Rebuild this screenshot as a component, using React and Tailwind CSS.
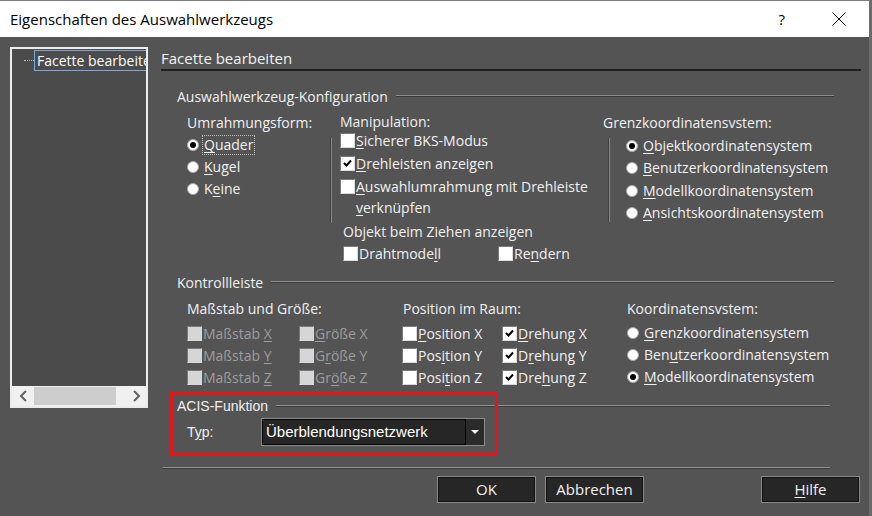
import React from "react";

const ui = "font-['Open_Sans',sans-serif]";
const arial = "font-['Liberation_Sans',Arial,sans-serif]";

function Acc({ text, at, dim }) {
  if (at === undefined || at < 0) return <span>{text}</span>;
  return (
    <span className={dim ? "text-[#9d9d9d]" : ""}>
      {text.slice(0, at)}
      <span className="underline underline-offset-2 decoration-1">{text[at]}</span>
      {text.slice(at + 1)}
    </span>
  );
}

function Radio({ on }) {
  return (
    <span className="w-[12px] h-[12px] rounded-full bg-white border border-[#a8a8a8] flex items-center justify-center shrink-0">
      {on && <span className="w-[6px] h-[6px] rounded-full bg-black" />}
    </span>
  );
}

function Box({ on, dim }) {
  return (
    <span
      className={
        "w-[15px] h-[15px] shrink-0 flex items-center justify-center border border-t-[#7a7a7a] border-l-[#7a7a7a] border-b-[#d9d9d9] border-r-[#d9d9d9] " +
        (dim ? "bg-[#d6d6d6]" : "bg-white")
      }
    >
      {on && (
        <svg width="9" height="8" viewBox="0 0 9 8">
          <path d="M1 4 L3.5 6.5 L8 1.5" fill="none" stroke="#000" strokeWidth="2" />
        </svg>
      )}
    </span>
  );
}

function RadioRow({ text, at, on, h = "h-[22px]", focus }) {
  return (
    <div className={"flex items-center gap-[4px] " + h}>
      <Radio on={on} />
      <span className={"leading-[18px] px-[1px] " + (focus ? "outline outline-1 outline-dotted outline-[#bbbbbb]" : "")}>
        <Acc text={text} at={at} />
      </span>
    </div>
  );
}

function CheckRow({ text, at, on, dim, h = "h-[22px]" }) {
  return (
    <div className={"flex items-center gap-[1px] " + h}>
      <Box on={on} dim={dim} />
      <span className={dim ? "text-[#9d9d9d]" : ""}>
        <Acc text={text} at={at} dim={dim} />
      </span>
    </div>
  );
}

function GroupLabel({ text, font = ui, w = "pr-[27px]" }) {
  return (
    <div className={"flex items-center h-[18px] pl-[16px] " + w}>
      <span className={font}>{text}</span>
      <div className="flex-1 ml-[8px] border-t border-t-[#8f8f8f] border-b border-b-[#3a3a3a]" />
    </div>
  );
}

function VSep({ h }) {
  return <div className={"w-[2px] border-l border-l-[#3c3c3c] border-r border-r-[#8a8a8a] " + h} />;
}

function Btn({ children, w = "w-[99px]" }) {
  return (
    <button className={"h-[27px] bg-[#262626] border border-[#8a8a8a] shadow-[inset_0_0_0_1px_#111] text-[#f2f2f2] text-[15px] flex items-center justify-center " + w}>
      {children}
    </button>
  );
}

export default function App() {
  return (
    <div className={"w-[872px] h-[516px] bg-[#545454] border-t border-t-[#7d7d7d] border-r-[3px] border-r-[#6b6b6b] overflow-hidden relative text-[14px] text-[#f1f1f1] " + ui}>
      {/* title bar */}
      <div className="h-[36px] bg-white flex items-center pl-[10px] text-black">
        <span className="text-[15px]">Eigenschaften des Auswahlwerkzeugs</span>
        <span className="ml-auto mr-[47px] text-[15px]">?</span>
        <svg className="mr-[23px]" width="14" height="14" viewBox="0 0 14 14">
          <path d="M0.5 0.5 L13.5 13.5 M13.5 0.5 L0.5 13.5" stroke="#000" strokeWidth="1" />
        </svg>
      </div>

      <div className="flex">
        {/* tree */}
        <div className="ml-[10px] mt-[10px] w-[138px] h-[361px] border-2 border-[#ececec] bg-[#4b4b4b] flex flex-col">
          <div className="flex items-center h-[22px] pl-[12px] overflow-hidden">
            <div className="w-[10px] shrink-0 border-t border-dotted border-[#bdbdbd]" />
            <div className="shrink-0 border border-[#7fa8d8] h-[21px] flex items-center pl-[2px] pr-[3px] whitespace-nowrap text-white">
              Facette bearbeiten
            </div>
          </div>
          <div className="flex-1" />
          <div className="h-[20px] bg-[#f0f0f0] flex items-center">
            <svg className="ml-[7px]" width="10" height="12" viewBox="0 0 10 12">
              <path d="M7 1 L2 6 L7 11" fill="none" stroke="#606060" strokeWidth="2" />
            </svg>
            <div className="ml-[5px] w-[82px] h-[18px] bg-[#cdcdcd]" />
            <svg className="ml-[15px]" width="10" height="12" viewBox="0 0 10 12">
              <path d="M3 1 L8 6 L3 11" fill="none" stroke="#606060" strokeWidth="2" />
            </svg>
          </div>
        </div>

        {/* right column */}
        <div className="ml-[13px] w-[700px] pt-[10px] flex flex-col">
          <div className="h-[22px] flex items-center text-[15px] border-b-2 border-b-[#1f1f1f] box-content">
            Facette bearbeiten
          </div>

          {/* group 1 */}
          <div className="mt-[16px]">
            <GroupLabel text="Auswahlwerkzeug-Konfiguration" />
          </div>
          <div className="mt-[7px] flex pl-[26px] h-[152px]">
            <div className="w-[143px] flex flex-col">
              <div className="h-[20px] flex items-center">Umrahmungsform:</div>
              <div className="mt-[2px]">
                <RadioRow text="Quader" at={0} on focus />
                <RadioRow text="Kugel" at={0} />
                <RadioRow text="Keine" at={1} />
              </div>
            </div>
            <div className="mt-[26px]">
              <VSep h="h-[85px]" />
            </div>
            <div className="ml-[8px] w-[263px] flex flex-col">
              <div className="h-[18px] flex items-center">Manipulation:</div>
              <CheckRow text="Sicherer BKS-Modus" at={0} h="h-[20px]" />
              <div className="mt-[2px]">
                <CheckRow text="Drehleisten anzeigen" at={0} on />
              </div>
              <div className="mt-[2px] flex flex-col">
                <CheckRow text="Auswahlumrahmung mit Drehleiste" at={0} h="h-[21px]" />
                <div className="h-[21px] flex items-center pl-[16px]">
                  <Acc text="verknüpfen" at={0} />
                </div>
              </div>
              <div className="h-[22px] mt-[2px] flex items-center pl-[3px]">Objekt beim Ziehen anzeigen</div>
              <div className="flex">
                <div className="w-[158px] pl-[3px]">
                  <CheckRow text="Drahtmodell" at={9} />
                </div>
                <CheckRow text="Rendern" at={2} />
              </div>
            </div>
            <div className="flex flex-col">
              <div className="h-[20px] flex items-center">Grenzkoordinatensvstem:</div>
              <div className="flex">
                <div className="ml-[5px] mt-[6px]">
                  <VSep h="h-[84px]" />
                </div>
                <div className="ml-[16px] flex flex-col mt-[3px]">
                  <RadioRow text="Objektkoordinatensystem" at={0} on />
                  <RadioRow text="Benutzerkoordinatensystem" at={0} />
                  <RadioRow text="Modellkoordinatensystem" at={0} h="h-[23px]" />
                  <RadioRow text="Ansichtskoordinatensystem" at={0} />
                </div>
              </div>
            </div>
          </div>

          {/* group 2 */}
          <div className="mt-[9px]">
            <GroupLabel text="Kontrollleiste" />
          </div>
          <div className="mt-[7px] pl-[26px] grid grid-cols-[112px_103px_100px_125px_1fr]">
            <div className="col-span-2 h-[20px] flex items-center">Maßstab und Größe:</div>
            <div className="col-span-2 h-[20px] flex items-center pl-[1px]">Position im Raum:</div>
            <div className="h-[20px] flex items-center">Koordinatensvstem:</div>

            <div className="mt-[4px]"><CheckRow text="Maßstab X" at={8} dim /></div>
            <div className="mt-[4px]"><CheckRow text="Größe X" at={0} dim /></div>
            <div className="mt-[4px]"><CheckRow text="Position X" at={0} /></div>
            <div className="mt-[4px]"><CheckRow text="Drehung X" at={0} on /></div>
            <div className="mt-[4px]"><RadioRow text="Grenzkoordinatensystem" at={0} /></div>

            <CheckRow text="Maßstab Y" at={8} dim />
            <CheckRow text="Größe Y" at={1} dim />
            <CheckRow text="Position Y" at={3} />
            <CheckRow text="Drehung Y" at={1} on />
            <RadioRow text="Benutzerkoordinatensystem" at={3} />

            <CheckRow text="Maßstab Z" at={8} dim />
            <CheckRow text="Größe Z" at={2} dim />
            <CheckRow text="Position Z" at={4} />
            <CheckRow text="Drehung Z" at={3} on />
            <RadioRow text="Modellkoordinatensystem" at={0} on />
          </div>

          {/* group 3 */}
          <div className="mt-[9px]">
            <GroupLabel text="ACIS-Funktion" font={arial} w="pr-[31px]" />
          </div>
          <div className={"mt-[3px] h-[28px] flex items-center pl-[26px] " + arial}>
            <span className="w-[74px]">
              T<span className="underline underline-offset-2">y</span>p:
            </span>
            <div className="flex h-[28px] border border-[#8a8a8a]">
              <div className="w-[204px] bg-[#262626] border border-black flex items-center pl-[3px] text-white text-[15px]">
                Überblendungsnetzwerk
              </div>
              <div className="w-[18px] bg-[#2b2b2b] flex items-center justify-center">
                <svg width="8" height="4" viewBox="0 0 8 4">
                  <path d="M0 0 L8 0 L4 4 Z" fill="#f0f0f0" />
                </svg>
              </div>
            </div>
          </div>

          <div className="mt-[21px] ml-[2px] w-[667px] border-t border-t-[#8f8f8f] border-b border-b-[#3a3a3a]" />

          <div className="mt-[7px] flex">
            <div className="ml-[276px]"><Btn>OK</Btn></div>
            <div className="ml-[9px]"><Btn>Abbrechen</Btn></div>
            <div className="ml-[117px]">
              <Btn><span><span className="underline underline-offset-2">H</span>ilfe</span></Btn>
            </div>
          </div>
        </div>
      </div>

      {/* red annotation frame */}
      <div className="absolute left-[170px] top-[391px] w-[328px] h-[64px] border-[3px] border-[#e8141c] pointer-events-none" />
    </div>
  );
}
